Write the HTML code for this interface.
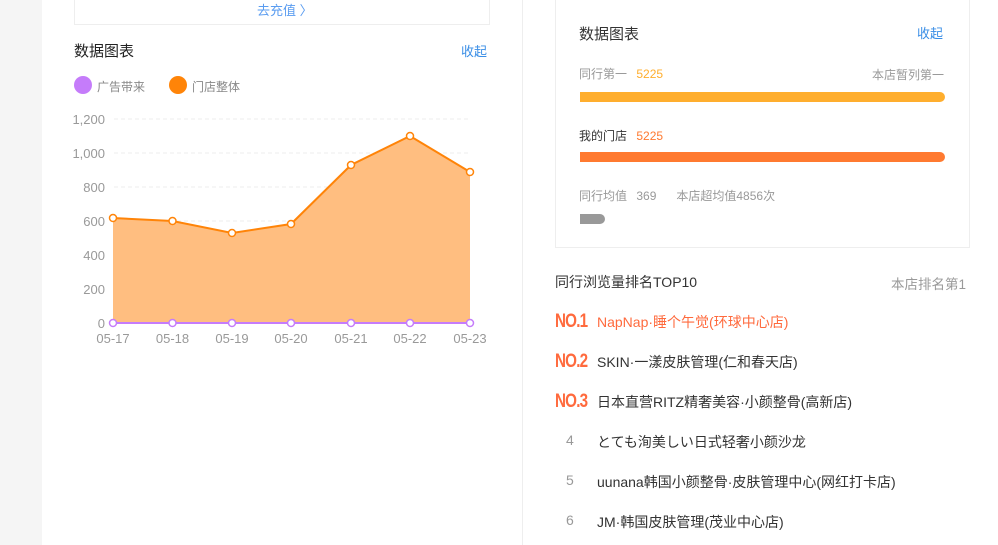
<!DOCTYPE html>
<html><head><meta charset="utf-8"><style>
*{margin:0;padding:0;box-sizing:border-box}
body{width:998px;height:545px;overflow:hidden;background:#fff;font-family:"Liberation Sans","Noto Sans CJK SC",sans-serif;position:relative}
.a{position:absolute;white-space:nowrap}
.no{font-family:"Liberation Sans",sans-serif;font-weight:bold;color:#ff6a3d;font-size:19px;transform:scaleX(.8);transform-origin:left;letter-spacing:-1px}
</style></head><body>
<div class="a" style="left:0;top:0;width:42px;height:545px;background:#f5f5f5"></div>
<div class="a" style="left:522px;top:0;width:1px;height:545px;background:#eee"></div>
<div class="a" style="left:74px;top:-5px;width:416px;height:30px;border:1px solid #eee;border-top:none"></div>
<div class="a" style="left:257px;top:0;font-size:13px;color:#5a9cf0">去充值 〉</div>
<div class="a" style="left:74px;top:40px;font-size:15px;color:#222">数据图表</div>
<div class="a" style="left:461px;top:41px;font-size:13px;color:#3a8ee6">收起</div>
<div class="a" style="left:74px;top:76px;width:18px;height:18px;border-radius:50%;background:#c57cfa"></div>
<div class="a" style="left:97px;top:78px;font-size:12px;color:#888">广告带来</div>
<div class="a" style="left:169px;top:76px;width:18px;height:18px;border-radius:50%;background:#ff8408"></div>
<div class="a" style="left:192px;top:78px;font-size:12px;color:#888">门店整体</div>
<svg class="a" style="left:60px;top:100px" width="460" height="260" font-family="Liberation Sans" font-size="13" fill="#999">
<g stroke="#eee" stroke-dasharray="4,3"><line x1="54" y1="19" x2="410" y2="19"/><line x1="54" y1="53" x2="410" y2="53"/><line x1="54" y1="87" x2="410" y2="87"/><line x1="54" y1="121" x2="410" y2="121"/><line x1="54" y1="155" x2="410" y2="155"/><line x1="54" y1="189" x2="410" y2="189"/></g>
<g text-anchor="end"><text x="45" y="24">1,200</text><text x="45" y="58">1,000</text><text x="45" y="92">800</text><text x="45" y="126">600</text><text x="45" y="160">400</text><text x="45" y="194">200</text><text x="45" y="228">0</text></g>
<polygon points="53,223 53,118 112.5,121 172,133 231,124 291,65 350,36 410,72 410,223" fill="#ffbe80"/>
<polyline points="53,118 112.5,121 172,133 231,124 291,65 350,36 410,72" fill="none" stroke="#ff8408" stroke-width="2"/>
<line x1="53" y1="223" x2="410" y2="223" stroke="#c57cfa" stroke-width="2"/>
<g fill="#fff" stroke="#ff8408" stroke-width="1.5"><circle cx="53" cy="118" r="3.5"/><circle cx="112.5" cy="121" r="3.5"/><circle cx="172" cy="133" r="3.5"/><circle cx="231" cy="124" r="3.5"/><circle cx="291" cy="65" r="3.5"/><circle cx="350" cy="36" r="3.5"/><circle cx="410" cy="72" r="3.5"/></g>
<g fill="#fff" stroke="#c57cfa" stroke-width="1.5"><circle cx="53" cy="223" r="3.5"/><circle cx="112.5" cy="223" r="3.5"/><circle cx="172" cy="223" r="3.5"/><circle cx="231" cy="223" r="3.5"/><circle cx="291" cy="223" r="3.5"/><circle cx="350" cy="223" r="3.5"/><circle cx="410" cy="223" r="3.5"/></g>
<g text-anchor="middle"><text x="53" y="243">05-17</text><text x="112.5" y="243">05-18</text><text x="172" y="243">05-19</text><text x="231" y="243">05-20</text><text x="291" y="243">05-21</text><text x="350" y="243">05-22</text><text x="410" y="243">05-23</text></g>
</svg>
<div class="a" style="left:555px;top:-5px;width:415px;height:253px;border:1px solid #eee;border-top:none"></div>
<div class="a" style="left:579px;top:23px;font-size:15px;color:#333">数据图表</div>
<div class="a" style="left:917px;top:23px;font-size:13px;color:#3a8ee6">收起</div>
<div class="a" style="left:579px;top:65px;font-size:12px;color:#999">同行第一 <span style="color:#ffae2e;margin-left:6px">5225</span></div>
<div class="a" style="left:872px;top:66px;font-size:12px;color:#999">本店暂列第一</div>
<div class="a" style="left:580px;top:92px;width:365px;height:10px;background:#ffae2e;border-radius:0 5px 5px 0"></div>
<div class="a" style="left:579px;top:127px;font-size:12px;color:#333">我的门店 <span style="color:#ff7a30;margin-left:6px">5225</span></div>
<div class="a" style="left:580px;top:152px;width:365px;height:10px;background:#ff7a30;border-radius:0 5px 5px 0"></div>
<div class="a" style="left:579px;top:187px;font-size:12px;color:#999">同行均值 <span style="margin-left:6px">369</span><span style="margin-left:20px">本店超均值4856次</span></div>
<div class="a" style="left:580px;top:214px;width:25px;height:10px;background:#999;border-radius:0 5px 5px 0"></div>
<div class="a" style="left:555px;top:272px;font-size:14px;color:#333">同行浏览量排名TOP10</div>
<div class="a" style="left:891px;top:273px;font-size:13.5px;color:#999">本店排名第1</div>
<div class="a no" style="left:555px;top:311px">NO.1</div>
<div class="a" style="left:597px;top:312px;font-size:14px;color:#ff6a3d">NapNap·睡个午觉(环球中心店)</div>
<div class="a no" style="left:555px;top:351px">NO.2</div>
<div class="a" style="left:597px;top:352px;font-size:14px;color:#333">SKIN·一漾皮肤管理(仁和春天店)</div>
<div class="a no" style="left:555px;top:391px">NO.3</div>
<div class="a" style="left:597px;top:392px;font-size:14px;color:#333">日本直营RITZ精奢美容·小颜整骨(高新店)</div>
<div class="a" style="left:566px;top:432px;font-size:14px;color:#999">4</div>
<div class="a" style="left:597px;top:432px;font-size:14px;color:#333">とても洵美しい日式轻奢小颜沙龙</div>
<div class="a" style="left:566px;top:472px;font-size:14px;color:#999">5</div>
<div class="a" style="left:597px;top:472px;font-size:14px;color:#333">uunana韩国小颜整骨·皮肤管理中心(网红打卡店)</div>
<div class="a" style="left:566px;top:512px;font-size:14px;color:#999">6</div>
<div class="a" style="left:597px;top:512px;font-size:14px;color:#333">JM·韩国皮肤管理(茂业中心店)</div>
</body></html>
